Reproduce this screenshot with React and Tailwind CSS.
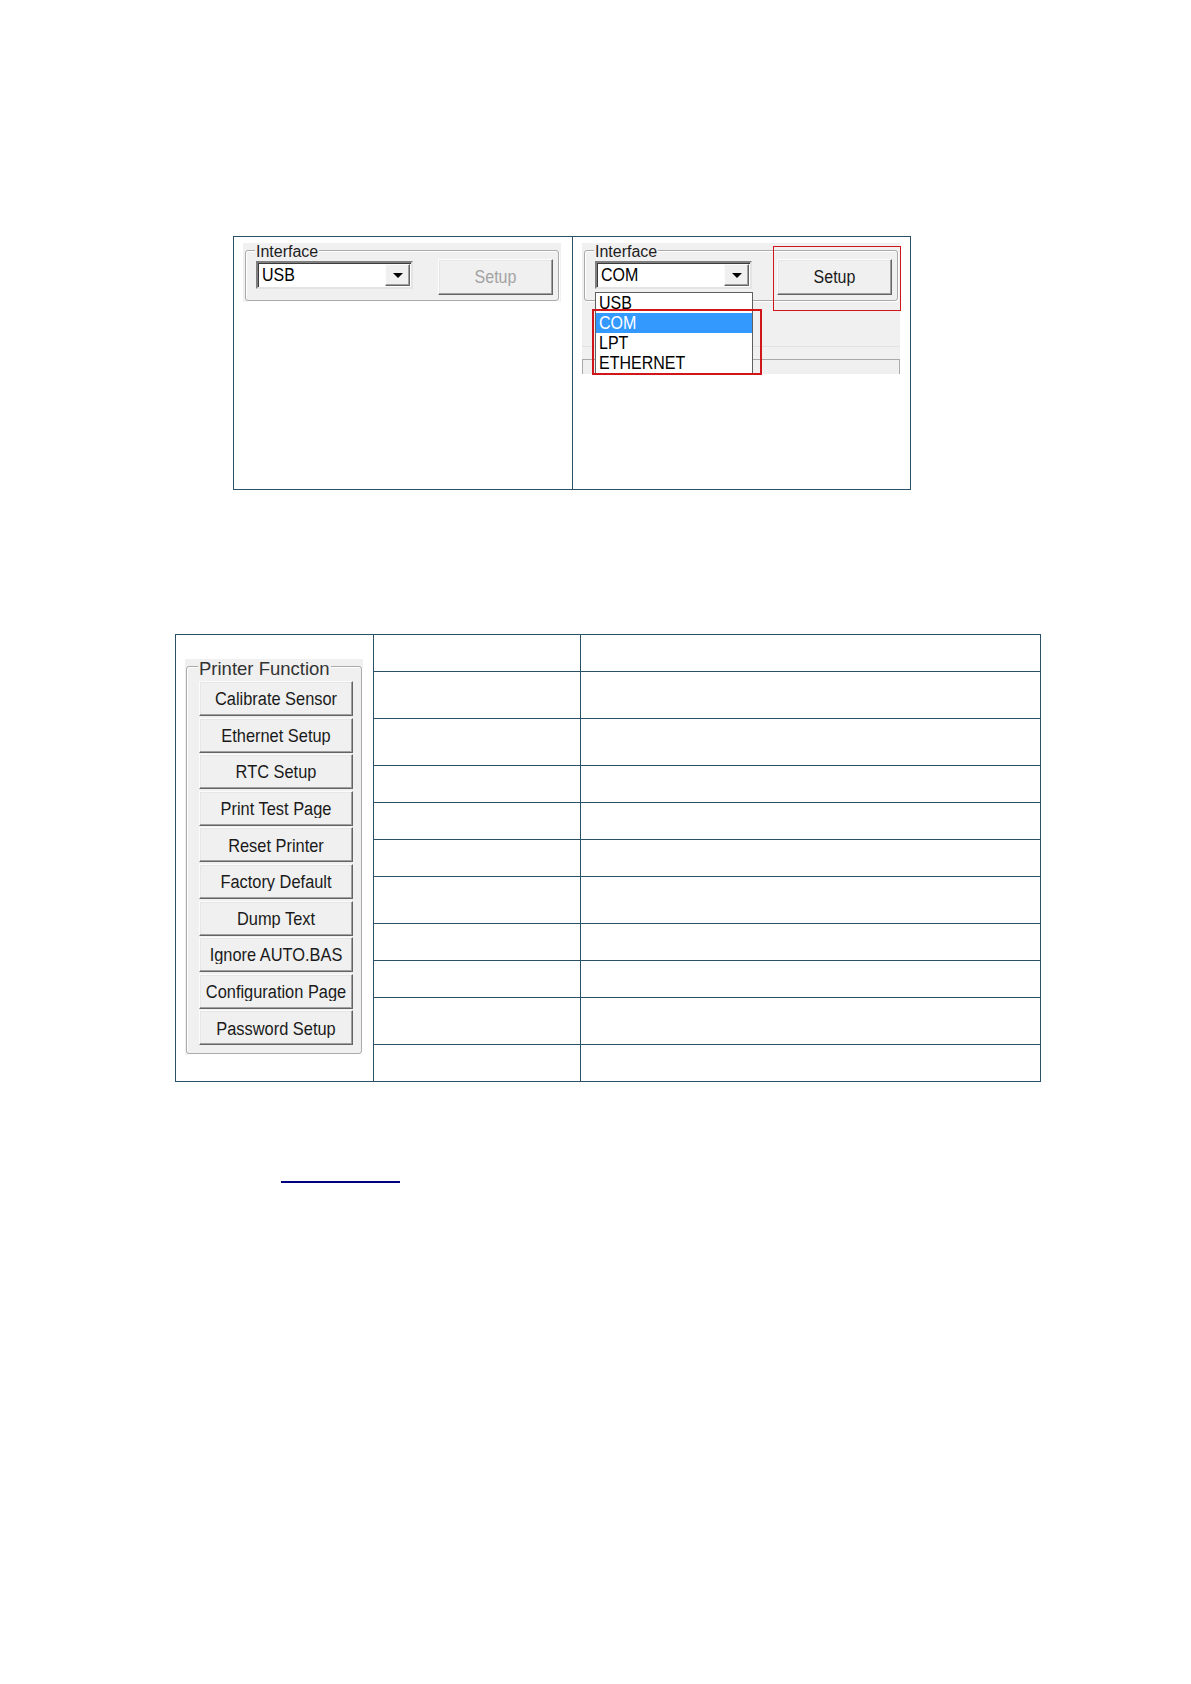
import React from "react";

const LINE = "border-[#2b5168]";

// classic windows group box: etched border, label sitting on the top edge
const GroupBox = ({ label, labelClass, className, children }) => (
  <div
    className={`rounded-[3px] border border-[#a9a9a9] shadow-[inset_1px_1px_0_#ffffff,1px_1px_0_#ffffff] ${className}`}
  >
    <div className={`w-fit bg-[#f0f0f0] px-px ${labelClass}`}>{label}</div>
    {children}
  </div>
);

const WinButton = ({ children, disabled, className }) => (
  <button
    className={`flex shrink-0 items-center justify-center border border-t-[#fcfcfc] border-l-[#fcfcfc] border-r-[#646464] border-b-[#646464] bg-[#f0f0f0] shadow-[inset_-1px_-1px_0_#a0a0a0,inset_1px_1px_0_#e6e6e6] ${
      disabled ? "text-[#a3a3a3]" : "text-[#1a1a1a]"
    } ${className}`}
  >
    <span className="inline-block scale-y-110 leading-none">{children}</span>
  </button>
);

const Combo = ({ value, children }) => (
  <div className="relative ml-[10px] mt-px flex h-[28px] w-[157px] shrink-0 border-2 border-t-[#7f7f7f] border-l-[#7f7f7f] border-r-[#e4e4e4] border-b-[#e4e4e4] bg-white shadow-[inset_1px_1px_0_#3c3c3c]">
    <div className="flex flex-1 items-center pl-[4px] text-[16px] text-black">
      <span className="inline-block scale-y-110 leading-none">{value}</span>
    </div>
    <div className="mr-px mt-px mb-px flex w-[25px] items-center justify-center border border-t-[#fcfcfc] border-l-[#fcfcfc] border-r-[#646464] border-b-[#646464] bg-[#f0f0f0] shadow-[inset_-1px_-1px_0_#a0a0a0]">
      <svg width="10" height="5" viewBox="0 0 10 5">
        <path d="M0 0h10L5 5z" fill="#000" />
      </svg>
    </div>
    {children}
  </div>
);

const InterfaceBox = ({ value, disabled, children }) => (
  <GroupBox
    label="Interface"
    labelClass="-mt-[7px] ml-[9px] h-[16px] text-[16px] leading-[16px] text-[#1e1e1e]"
    className="h-[51px] w-[314px]"
  >
    <div className="flex items-start">
      <Combo value={value}>{children}</Combo>
      <WinButton disabled={disabled} className="-mt-px ml-[25px] h-[36px] w-[115px] text-[16px]">
        Setup
      </WinButton>
    </div>
  </GroupBox>
);

const functions = [
  "Calibrate Sensor",
  "Ethernet Setup",
  "RTC Setup",
  "Print Test Page",
  "Reset Printer",
  "Factory Default",
  "Dump Text",
  "Ignore AUTO.BAS",
  "Configuration Page",
  "Password Setup",
];

const rowHeights = [
  "h-[37px]",
  "h-[47px]",
  "h-[47px]",
  "h-[37px]",
  "h-[37px]",
  "h-[37px]",
  "h-[47px]",
  "h-[37px]",
  "h-[37px]",
  "h-[47px]",
  "h-[37px]",
];

export default function App() {
  return (
    <div className="min-h-[1684px] w-full bg-white pt-[236px] font-['Liberation_Sans',Arial,sans-serif]">
      {/* Interface screenshots */}
      <div className={`ml-[233px] flex h-[254px] w-[678px] border ${LINE}`}>
        <div className={`w-[339px] shrink-0 border-r ${LINE} pl-[9px] pt-[6px]`}>
          <div className="h-[59px] w-[318px] bg-[#f0f0f0] pl-[2px] pt-[7px]">
            <InterfaceBox value="USB" disabled />
          </div>
        </div>

        <div className="relative flex-1 pl-[9px] pt-[6px]">
          <div className="h-[131px] w-[318px] bg-[#f0f0f0] pt-[7px]">
            <div className="pl-[2px]">
              <InterfaceBox value="COM">
                <div className="absolute -left-[2px] top-[29px] z-10 h-[82px] w-[158px] border border-[#5f5f5f] bg-white text-[16px] text-black">
                  {["USB", "COM", "LPT", "ETHERNET"].map((item) => (
                    <div
                      key={item}
                      className={`flex h-[20px] items-center pl-[3px] ${
                        item === "COM" ? "bg-[#3399ff] text-white" : ""
                      }`}
                    >
                      <span className="inline-block scale-y-110 leading-none">{item}</span>
                    </div>
                  ))}
                </div>
              </InterfaceBox>
            </div>
            <div className="mt-[45px] h-px bg-[#e2e2e2]" />
            <div className="mt-[12px] h-[15px] border-l border-r border-t border-[#a9a9a9]" />
          </div>

          {/* red highlight frames */}
          <div className="absolute left-[19px] top-[72px] z-20 h-[66px] w-[170px] border-2 border-[#d0161b]" />
          <div className="absolute left-[200px] top-[9px] z-20 h-[65px] w-[128px] border border-[#d0161b]" />
        </div>
      </div>

      {/* Printer function table */}
      <div className="ml-[175px] mt-[144px] flex w-[866px]">
        <div className={`h-[448px] w-[198px] shrink-0 border-b border-l border-t ${LINE} pl-[9px] pt-[24px]`}>
          <div className="h-[396px] w-[178px] bg-[#f0f0f0] px-px pt-[7px]">
            <GroupBox
              label="Printer Function"
              labelClass="-mt-[7px] ml-[11px] h-[18px] text-[18.5px] leading-[18px] text-[#333333]"
              className="h-[388px] w-[176px]"
            >
              <div className="ml-[12px] mt-[3px] flex w-[154px] flex-col gap-[1.6px]">
                {functions.map((f) => (
                  <WinButton key={f} className="h-[35px] w-[154px] text-[16.4px]">
                    {f}
                  </WinButton>
                ))}
              </div>
            </GroupBox>
          </div>
        </div>

        <div className={`flex-1 border-b border-l border-r ${LINE}`}>
          {rowHeights.map((h, i) => (
            <div key={i} className={`flex ${h} border-t ${LINE}`}>
              <div className={`w-[207px] shrink-0 border-r ${LINE}`} />
              <div className="flex-1" />
            </div>
          ))}
        </div>
      </div>

      <a href="#" className="ml-[281px] mt-[99px] block h-[2px] w-[119px] bg-[#000080]" />
    </div>
  );
}
